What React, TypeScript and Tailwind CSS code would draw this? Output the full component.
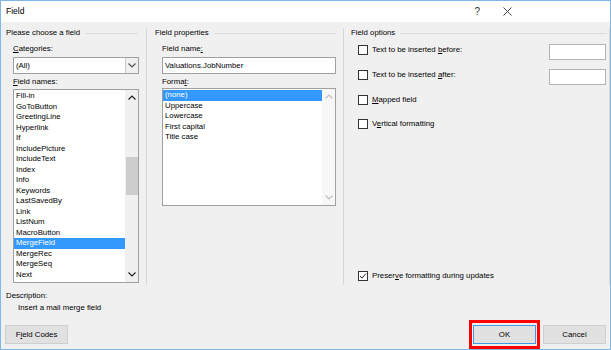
import React from "react";

const font = { fontFamily: '"Liberation Sans", Arial, sans-serif' };

const fieldNames = [
  "Fill-in",
  "GoToButton",
  "GreetingLine",
  "Hyperlink",
  "If",
  "IncludePicture",
  "IncludeText",
  "Index",
  "Info",
  "Keywords",
  "LastSavedBy",
  "Link",
  "ListNum",
  "MacroButton",
  "MergeField",
  "MergeRec",
  "MergeSeq",
  "Next",
];

const formats = ["(none)", "Uppercase", "Lowercase", "First capital", "Title case"];

function Chevron({ up, color = "#404040" }: { up?: boolean; color?: string }) {
  return (
    <svg width="8" height="5" viewBox="0 0 8 5">
      <polyline
        points={up ? "0.5,4.5 4,1 7.5,4.5" : "0.5,0.5 4,4 7.5,0.5"}
        fill="none"
        stroke={color}
        strokeWidth="1.2"
      />
    </svg>
  );
}

function GroupHeader({ title, pr }: { title: string; pr: string }) {
  return (
    <div className={`flex items-center gap-[5px] h-[10px] leading-[10px] ${pr}`}>
      <span>{title}</span>
      <div className="flex-1 h-px bg-[#dcdcdc]" />
    </div>
  );
}

function CheckBox({ checked }: { checked?: boolean }) {
  return (
    <div className="w-[10px] h-[10px] border border-[#333333] bg-white flex items-center justify-center shrink-0">
      {checked && (
        <svg width="8" height="8" viewBox="0 0 8 8">
          <polyline points="1,4 3,6.2 7,1.5" fill="none" stroke="#222" strokeWidth="1" />
        </svg>
      )}
    </div>
  );
}

export default function App() {
  return (
    <div
      className="w-[611px] h-[350px] border border-[#7fb7e6] bg-[#f0f0f0] flex flex-col text-[7.8px] text-black overflow-hidden"
      style={font}
    >
      {/* Title bar */}
      <div className="h-[21px] bg-white flex items-center shrink-0">
        <span className="pl-[5px] text-[8.5px]">Field</span>
        <div className="flex-1" />
        <span className="text-[10px] text-[#333] mr-[23px]">?</span>
        <svg width="10" height="10" viewBox="0 0 10 10" className="mr-[97px] hidden" />
        <svg width="9" height="9" viewBox="0 0 9 9" className="mr-[98px]">
          <line x1="0.5" y1="0.5" x2="8.5" y2="8.5" stroke="#333" strokeWidth="0.9" />
          <line x1="8.5" y1="0.5" x2="0.5" y2="8.5" stroke="#333" strokeWidth="0.9" />
        </svg>
      </div>

      {/* Columns */}
      <div className="mt-[6px] h-[257px] flex shrink-0">
        {/* Column 1 */}
        <div className="w-[146px] border-r border-[#d2d8dd] pl-[5px] flex flex-col">
          <GroupHeader title="Please choose a field" pr="pr-[8px]" />
          <div className="pl-[7px] flex flex-col">
            <div className="mt-[6px] h-[10px] leading-[10px]">
              <span className="underline">C</span>ategories:
            </div>
            <div className="mt-[3px] w-[126px] h-[17px] border border-[#a0a0a0] bg-white flex">
              <div className="flex-1 pl-[2px] flex items-center">(All)</div>
              <div className="w-[13px] border-l border-[#c8c8c8] bg-[#f0f0f0] flex items-center justify-center">
                <Chevron color="#555" />
              </div>
            </div>
            <div className="mt-[3px] h-[10px] leading-[10px]">
              <span className="underline">F</span>ield names:
            </div>
            <div className="mt-[2px] w-[126px] h-[194px] border border-[#a0a0a0] bg-white flex">
              <div className="flex-1 pt-px">
                {fieldNames.map((n) => (
                  <div
                    key={n}
                    className={`h-[10.5px] leading-[10.5px] pl-[2px] ${
                      n === "MergeField" ? "bg-[#3399ff] text-white" : ""
                    }`}
                  >
                    {n}
                  </div>
                ))}
              </div>
              <div className="w-[13px] bg-[#f0f0f0] flex flex-col items-center">
                <div className="h-[15px] flex items-center justify-center">
                  <Chevron up color="#222" />
                </div>
                <div className="mt-[52px] w-[12px] h-[38px] bg-[#cdcdcd]" />
                <div className="flex-1" />
                <div className="h-[15px] flex items-center justify-center">
                  <Chevron color="#222" />
                </div>
              </div>
            </div>
          </div>
        </div>

        {/* Column 2 */}
        <div className="w-[197px] border-r border-[#d2d8dd] pl-[8px] flex flex-col">
          <GroupHeader title="Field properties" pr="pr-[7px]" />
          <div className="pl-[7px] flex flex-col">
            <div className="mt-[6px] h-[10px] leading-[10px]">
              Field name<span className="underline">:</span>
            </div>
            <div className="mt-[3px] w-[174px] h-[17px] border border-[#a0a0a0] bg-white flex items-center pl-[2px]">
              Valuations.JobNumber
            </div>
            <div className="mt-[3px] h-[10px] leading-[10px]">
              Forma<span className="underline">t</span>:
            </div>
            <div className="mt-px w-[174px] h-[118px] border border-[#a0a0a0] bg-white flex">
              <div className="flex-1 pt-px">
                {formats.map((f) => (
                  <div
                    key={f}
                    className={`h-[10.5px] leading-[10.5px] pl-[2px] ${
                      f === "(none)" ? "bg-[#3399ff] text-white" : ""
                    }`}
                  >
                    {f}
                  </div>
                ))}
              </div>
              <div className="w-[13px] bg-[#f7f7f7] flex flex-col items-center">
                <div className="h-[15px] flex items-center justify-center">
                  <Chevron up color="#bfbfbf" />
                </div>
                <div className="flex-1" />
                <div className="h-[15px] flex items-center justify-center">
                  <Chevron color="#bfbfbf" />
                </div>
              </div>
            </div>
          </div>
        </div>

        {/* Column 3 */}
        <div className="w-[266px] border-r border-[#d2d8dd] pl-[7px] flex flex-col">
          <GroupHeader title="Field options" pr="pr-[2px]" />
          <div className="pl-[7px] pr-[3px] flex flex-col">
            <div className="mt-[6px] h-[16px] flex items-start">
              <div className="mt-px flex items-center gap-[4px] h-[10px]">
                <CheckBox />
                <span>
                  Text to be inserted <span className="underline">b</span>efore:
                </span>
              </div>
              <div className="flex-1" />
              <div className="w-[57px] h-[16px] border border-[#b4b4b4] bg-white" />
            </div>
            <div className="mt-[9px] h-[16px] flex items-start">
              <div className="mt-px flex items-center gap-[4px] h-[10px]">
                <CheckBox />
                <span>
                  Text to be inserted <span className="underline">a</span>fter:
                </span>
              </div>
              <div className="flex-1" />
              <div className="w-[57px] h-[16px] border border-[#b4b4b4] bg-white" />
            </div>
            <div className="mt-[10px] flex items-center gap-[4px] h-[10px]">
              <CheckBox />
              <span>
                <span className="underline">M</span>apped field
              </span>
            </div>
            <div className="mt-[14px] flex items-center gap-[4px] h-[10px]">
              <CheckBox />
              <span>
                V<span className="underline">e</span>rtical formatting
              </span>
            </div>
          </div>
          <div className="flex-1" />
          <div className="pl-[7px] mb-[4px] flex items-center gap-[4px] h-[10px]">
            <CheckBox checked />
            <span>
              Preser<span className="underline">v</span>e formatting during updates
            </span>
          </div>
        </div>
      </div>

      {/* Bottom area */}
      <div className="flex-1 flex flex-col">
        <div className="mt-[6px] pl-[5px] h-[10px] leading-[10px]">Description:</div>
        <div className="mt-[2px] pl-[17px] h-[10px] leading-[10px]">Insert a mail merge field</div>
        <div className="mt-[12px] flex items-center pl-[4px] pr-[4px]">
          <button className="w-[63px] h-[19px] border border-[#cfcfcf] bg-[#e1e1e1] flex items-center justify-center">
            F<span className="underline">i</span>eld Codes
          </button>
          <div className="flex-1" />
          <div className="relative">
            <button className="w-[63px] h-[19px] border border-[#3c9be8] bg-[#e1e1e1] flex items-center justify-center">
              OK
            </button>
            <div className="absolute left-[-4px] top-[-5px] w-[71px] h-[29px] border-[3px] border-[#ff0000] pointer-events-none" />
          </div>
          <button className="ml-[7px] w-[63px] h-[19px] border border-[#cfcfcf] bg-[#e1e1e1] flex items-center justify-center">
            Cancel
          </button>
        </div>
      </div>
    </div>
  );
}
